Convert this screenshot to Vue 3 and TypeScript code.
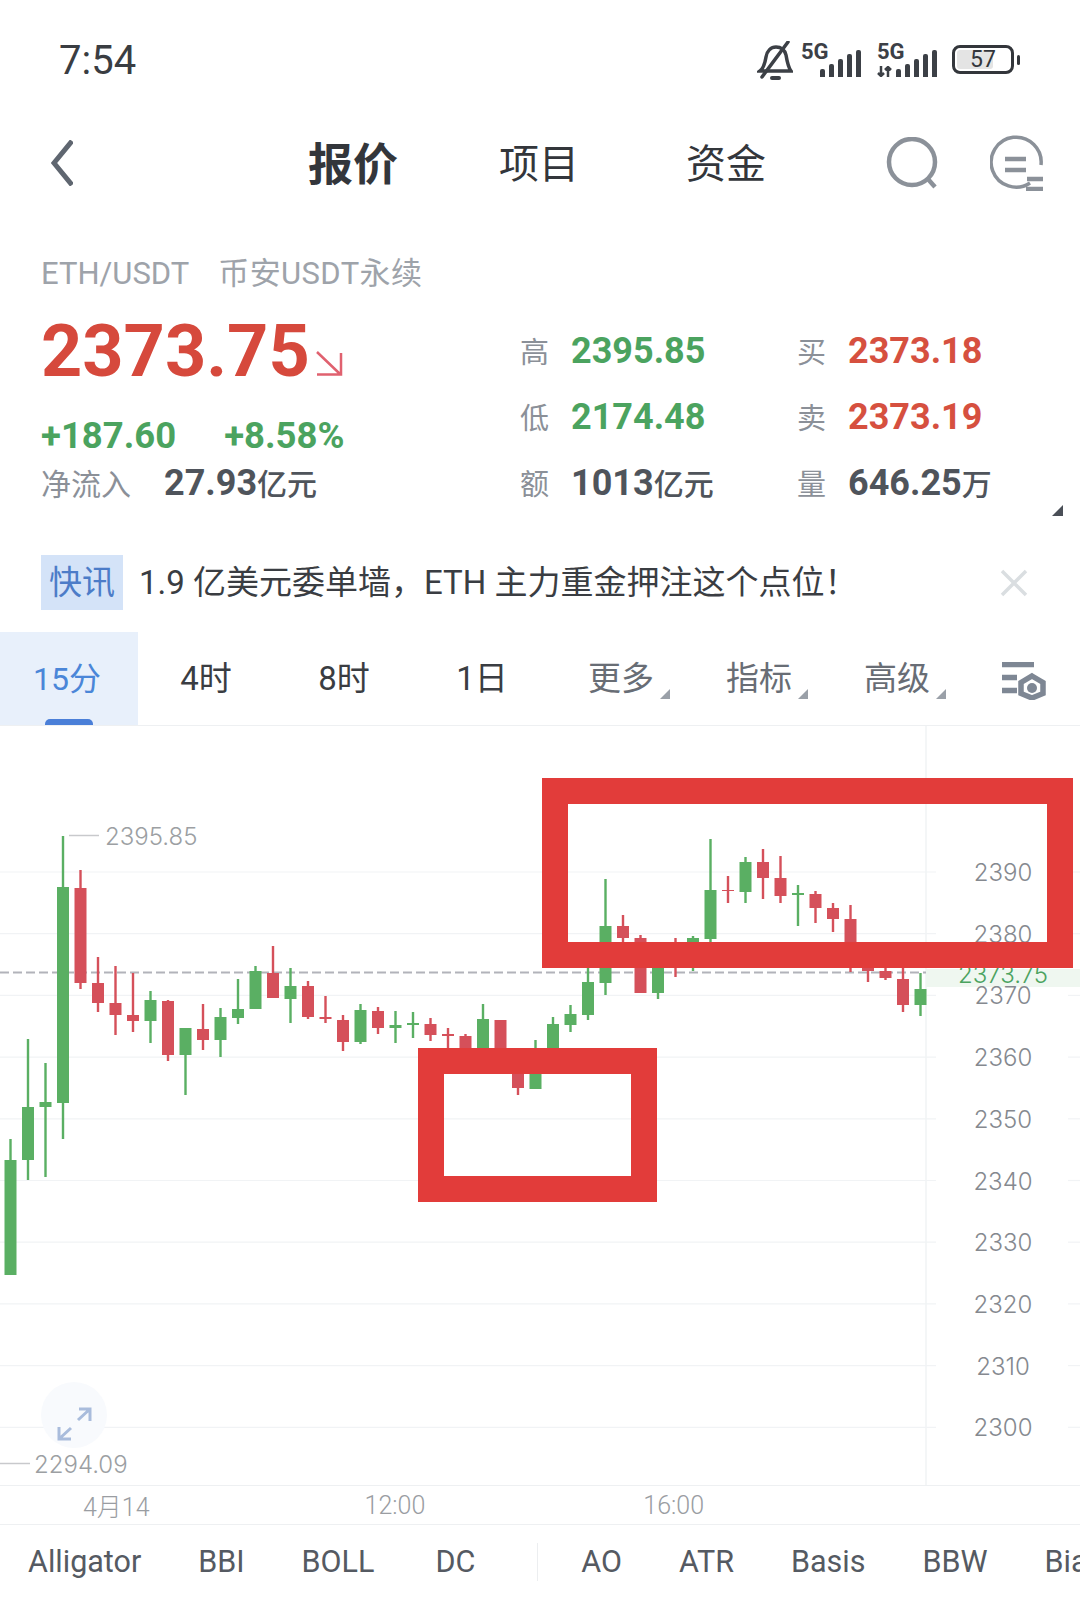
<template>
  <div class="screen">
    <!-- status bar -->
    <div class="status">
      <span class="clock">7:54</span>
      <div class="status-icons">
        <svg class="bell" width="36" height="40" viewBox="0 0 36 40" fill="none" stroke="#3c4046" stroke-width="3.500" stroke-linecap="round">
          <path d="M3 30c4-3 5-8 6-14 1-6 5-10 10-10s9 3 10 8c1 6 2 12 5 16z" />
          <path d="M31 1 5 36" />
          <path d="M15 37h7" stroke-width="4" />
        </svg>
        <div class="net">
          <span class="net-label">5G</span>
          <div class="bars">
            <i v-for="h in signal" :key="h" :style="{ height: h + 'px' }"></i>
          </div>
        </div>
        <div class="net net-two">
          <span class="net-label">5G</span>
          <svg class="updown" width="15" height="11" viewBox="0 0 15 11" fill="none" stroke="#3c4046" stroke-width="2.500">
            <path d="M4 0v10M1 7l3 3 3-3M11 11V1M8 4l3-3 3 3" />
          </svg>
          <div class="bars">
            <i v-for="h in signal" :key="h" :style="{ height: h + 'px' }"></i>
          </div>
        </div>
        <div class="battery">
          <div class="battery-body">
            <div class="battery-fill"></div>
            <span>57</span>
          </div>
          <div class="battery-nub"></div>
        </div>
      </div>
    </div>

    <!-- top nav -->
    <div class="nav">
      <svg class="back" width="22" height="46" viewBox="0 0 22 46" fill="none" stroke="#5f6670" stroke-width="5">
        <path d="M21 1 3 23l18 22" />
      </svg>
      <span class="nav-item active">报价</span>
      <span class="nav-item">项目</span>
      <span class="nav-item">资金</span>
      <svg class="nav-search" width="54" height="52" viewBox="0 0 54 52" fill="none" stroke="#8b9199" stroke-width="4.500">
        <circle cx="26" cy="25" r="23" />
        <path d="m41 41 8 9" />
      </svg>
      <svg class="nav-menu" width="54" height="56" viewBox="0 0 54 56" fill="none" stroke="#8b9199" stroke-width="3.500">
        <path d="M40 48A25 25 0 1 1 51 30" />
        <path d="M15 24h21M15 35h21" stroke-width="4.500" />
        <path d="M37 44h16M36 54h17" stroke-width="4.500" />
      </svg>
    </div>

    <!-- quote -->
    <div class="quote">
      <div class="pair">
        <span>ETH/USDT</span>
        <span class="pair-market">币安USDT永续</span>
      </div>
      <div class="quote-body">
        <div class="quote-left">
          <div class="last">
            <span class="last-price">2373.75</span>
            <svg width="27" height="26" viewBox="0 0 27 26" fill="none" stroke="#e0616f" stroke-width="2.500">
              <path d="m1 2 23 22M25 3v21.500H1" />
            </svg>
          </div>
          <div class="change">
            <span>+187.60</span>
            <span>+8.58%</span>
          </div>
          <div class="flow">
            <span class="stat-label">净流入</span>
            <span class="stat-num dark">27.93<small>亿元</small></span>
          </div>
        </div>
        <div class="stats">
          <div v-for="s in stats" :key="s.label" class="stat">
            <span class="stat-label">{{ s.label }}</span>
            <span class="stat-num" :class="s.tone">{{ s.value }}<small v-if="s.unit">{{ s.unit }}</small></span>
          </div>
        </div>
      </div>
      <i class="corner quote-corner"></i>
    </div>

    <!-- news -->
    <div class="news">
      <span class="news-tag">快讯</span>
      <span class="news-text">1.9 亿美元委单墙，ETH 主力重金押注这个点位！</span>
      <svg class="news-close" width="28" height="28" viewBox="0 0 28 28" stroke="#dadee1" stroke-width="3.500">
        <path d="m2 2 24 24M26 2 2 26" />
      </svg>
    </div>

    <!-- period tabs -->
    <div class="periods">
      <div v-for="p in periods" :key="p.label" class="period" :class="{ active: p.active, muted: p.more }">
        <span>{{ p.label }}</span>
        <i v-if="p.more" class="corner"></i>
      </div>
      <svg class="period-set" width="46" height="38" viewBox="0 0 46 38" fill="none">
        <path d="M1 2.500h32M1 15.500h15M1 28.500h15" stroke="#7e8794" stroke-width="5.500" />
        <path d="M31 14 42 20.500v11L31 36 20 31.500v-11z" stroke="#7e8794" stroke-width="5.500" />
        <circle cx="31" cy="26" r="5" fill="#7e8794" />
      </svg>
    </div>

    <!-- chart -->
    <svg class="chart" width="1080" height="759" viewBox="0 726 1080 759">
      <g stroke="#f1f3f5" stroke-width="1.200">
        <template v-for="g in grid" :key="g.label">
          <line x1="0" x2="936" :y1="g.y" :y2="g.y" />
          <line x1="1068" x2="1080" :y1="g.y" :y2="g.y" />
        </template>
      </g>
      <line x1="926" x2="926" y1="726" y2="1485" stroke="#f1f3f5" stroke-width="1.500" />
      <rect x="926" y="969" width="154" height="18" fill="#eff7f0" />
      <line x1="0" x2="926" y1="972.500" y2="972.500" stroke="#b2b3ba" stroke-width="1.800" stroke-dasharray="9 4" />

      <circle cx="74" cy="1415" r="33" fill="#f8fafd" />
      <path d="M78 1420 90 1409M79 1409h11v12M71 1428 59 1439M59 1427v12h12" fill="none" stroke="#a9bcdc" stroke-width="3" />

      <g v-for="(c, i) in candles" :key="i" :fill="c[4] === 'g' ? '#5aaf63' : '#d5505a'">
        <rect :x="candleX(i) - 1" :y="c[0]" width="2.400" :height="c[3] - c[0]" />
        <rect :x="candleX(i) - 5.800" :y="c[1]" width="12" :height="c[2] - c[1]" />
      </g>

      <line x1="69" x2="99" y1="835.500" y2="835.500" stroke="#c8c9cc" stroke-width="1.500" />
      <text class="extreme" x="105" y="845">2395.85</text>
      <line x1="0" x2="30" y1="1463.500" y2="1463.500" stroke="#c8c9cc" stroke-width="1.500" />
      <text class="extreme" x="34" y="1473">2294.09</text>

      <text v-for="g in grid" :key="g.label" class="axis" x="1003" :y="g.y + 9">{{ g.label }}</text>
      <text class="axis last-tag" x="1003" y="983">2373.75</text>

      <!-- hand-drawn annotation boxes on top of the chart -->
      <rect class="mark" x="555" y="791" width="505" height="164" />
      <rect class="mark" x="431" y="1061" width="213" height="128" />
    </svg>

    <!-- time axis -->
    <div class="times">
      <span>4月14</span>
      <span>12:00</span>
      <span>16:00</span>
    </div>

    <!-- indicators -->
    <div class="indicators">
      <span v-for="n in mainIndicators" :key="n">{{ n }}</span>
      <i class="ind-divider"></i>
      <span v-for="n in subIndicators" :key="n">{{ n }}</span>
    </div>
  </div>
</template>

<script setup lang="ts">
type Candle = [number, number, number, number, 'g' | 'r'];

const signal = [8, 13, 18, 23, 27];

const stats = [
  { label: '高', value: '2395.85', tone: 'up', unit: '' },
  { label: '买', value: '2373.18', tone: 'down', unit: '' },
  { label: '低', value: '2174.48', tone: 'up', unit: '' },
  { label: '卖', value: '2373.19', tone: 'down', unit: '' },
  { label: '额', value: '1013', tone: 'dark', unit: '亿元' },
  { label: '量', value: '646.25', tone: 'dark', unit: '万' },
];

const periods = [
  { label: '15分', active: true, more: false },
  { label: '4时', active: false, more: false },
  { label: '8时', active: false, more: false },
  { label: '1日', active: false, more: false },
  { label: '更多', active: false, more: true },
  { label: '指标', active: false, more: true },
  { label: '高级', active: false, more: true },
];

const grid = [2390, 2380, 2370, 2360, 2350, 2340, 2330, 2320, 2310, 2300].map((v, i) => ({
  label: String(v),
  y: 872 + i * 61.7,
}));

const mainIndicators = ['Alligator', 'BBI', 'BOLL', 'DC'];
const subIndicators = ['AO', 'ATR', 'Basis', 'BBW', 'Bias'];

// high, body top, body bottom, low (page y), colour
const candles: Candle[] = [
  [1139, 1160, 1275, 1275, 'g'],
  [1039, 1107, 1160, 1180, 'g'],
  [1063, 1102, 1107, 1177, 'g'],
  [836, 887, 1103, 1139, 'g'],
  [870, 888, 983, 989, 'r'],
  [957, 983, 1003, 1012, 'r'],
  [966, 1003, 1015, 1035, 'r'],
  [973, 1015, 1021, 1032, 'r'],
  [991, 1000, 1021, 1043, 'g'],
  [1000, 1001, 1055, 1061, 'r'],
  [1028, 1028, 1055, 1095, 'g'],
  [1004, 1029, 1040, 1050, 'r'],
  [1008, 1017, 1040, 1057, 'g'],
  [979, 1009, 1018, 1024, 'g'],
  [966, 971, 1009, 1009, 'g'],
  [946, 973, 998, 998, 'r'],
  [968, 986, 999, 1023, 'g'],
  [981, 986, 1017, 1019, 'r'],
  [996, 1017, 1019, 1023, 'r'],
  [1015, 1020, 1042, 1051, 'r'],
  [1004, 1010, 1042, 1044, 'g'],
  [1007, 1011, 1028, 1034, 'r'],
  [1011, 1025, 1028, 1043, 'g'],
  [1012, 1023, 1025, 1038, 'g'],
  [1018, 1024, 1035, 1041, 'r'],
  [1028, 1034, 1036, 1055, 'r'],
  [1034, 1036, 1052, 1052, 'r'],
  [1004, 1019, 1052, 1052, 'g'],
  [1020, 1020, 1052, 1052, 'r'],
  [1050, 1055, 1088, 1095, 'r'],
  [1040, 1055, 1089, 1089, 'g'],
  [1017, 1024, 1052, 1052, 'g'],
  [1005, 1014, 1025, 1032, 'g'],
  [960, 982, 1015, 1020, 'g'],
  [879, 926, 983, 995, 'g'],
  [915, 926, 938, 945, 'r'],
  [935, 938, 993, 993, 'r'],
  [950, 955, 993, 999, 'g'],
  [938, 950, 952, 977, 'r'],
  [936, 938, 950, 971, 'g'],
  [839, 890, 939, 942, 'g'],
  [876, 890, 891, 903, 'r'],
  [857, 862, 892, 903, 'g'],
  [849, 862, 878, 899, 'r'],
  [856, 878, 896, 903, 'r'],
  [885, 893, 895, 926, 'g'],
  [891, 894, 908, 923, 'r'],
  [903, 908, 919, 932, 'r'],
  [905, 919, 945, 972, 'r'],
  [950, 955, 971, 982, 'r'],
  [960, 971, 978, 980, 'r'],
  [963, 979, 1005, 1012, 'r'],
  [973, 989, 1005, 1016, 'g'],
];

function candleX(i: number): number {
  return 10.3 + 17.5 * i;
}
</script>

<style>
body {
  background: #fff;
}
</style>

<style scoped>
.screen {
  width: 1080px;
  height: 1602px;
  overflow: hidden;
  background: #fff;
  display: flex;
  flex-direction: column;
  font-family: Roboto, "Noto Sans CJK SC", sans-serif;
  color: #33363b;
}
.screen > * {
  flex-shrink: 0;
}

.status {
  height: 120px;
  padding: 41px 60px 0 59px;
  box-sizing: border-box;
  display: flex;
  justify-content: space-between;
  align-items: flex-start;
}
.clock {
  font-size: 40px;
  line-height: 40px;
  color: #3a3d42;
}
.status-icons {
  display: flex;
  align-items: flex-start;
}
.net {
  position: relative;
  width: 60px;
  height: 34px;
  margin: 2px 0 0 8px;
}
.net-two {
  margin-left: 16px;
}
.net-label {
  position: absolute;
  left: 0;
  top: 0;
  font-size: 22px;
  line-height: 18px;
  font-weight: 700;
  color: #3c4046;
}
.updown {
  position: absolute;
  left: 0;
  bottom: 0;
}
.bars {
  position: absolute;
  right: 0;
  bottom: 0;
  display: flex;
  align-items: flex-end;
  gap: 4px;
}
.bars i {
  width: 5px;
  background: #3c4046;
  border-radius: 2px 2px 0 0;
}
.battery {
  display: flex;
  align-items: center;
  margin: 4px 0 0 15px;
}
.battery-body {
  position: relative;
  width: 62px;
  height: 29px;
  box-sizing: border-box;
  border: 3px solid #33363b;
  border-radius: 8px;
  display: flex;
  align-items: center;
  justify-content: center;
  font-size: 23px;
  color: #33363b;
}
.battery-fill {
  position: absolute;
  left: 2px;
  top: 2px;
  bottom: 2px;
  width: 36px;
  background: #e4e4e4;
  border-radius: 3px;
}
.battery-body span {
  position: relative;
}
.battery-nub {
  width: 3px;
  height: 10px;
  margin-left: 3px;
  background: #33363b;
  border-radius: 2px;
}

.nav {
  height: 120px;
  display: flex;
  align-items: center;
  padding: 0 36px 34px 51px;
  box-sizing: border-box;
}
.nav-item {
  font-size: 40px;
  width: 78px;
  margin-left: 109px;
  margin-bottom: 4px;
  white-space: nowrap;
  color: #33363b;
}
.nav-item.active {
  width: 90px;
  font-size: 45px;
  font-weight: 700;
  margin-left: 235px;
}
.nav-item.active + .nav-item {
  margin-left: 101px;
}
.nav-search {
  margin-left: auto;
}
.nav-menu {
  margin-left: 50px;
}

.quote {
  position: relative;
  height: 300px;
  padding: 13px 0 0 41px;
  box-sizing: border-box;
}
.pair {
  display: flex;
  gap: 29px;
  font-size: 31px;
  line-height: 42px;
  color: #9ea3aa;
}
.pair-market {
  letter-spacing: 0.4px;
}
.quote-body {
  display: flex;
  margin-top: 25px;
}
.quote-left {
  width: 479px;
  flex-shrink: 0;
}
.last {
  display: flex;
  align-items: flex-end;
  gap: 6px;
  height: 64px;
}
.last svg {
  margin-bottom: 8px;
}
.last-price {
  font-size: 72px;
  line-height: 64px;
  font-weight: 700;
  color: #d6493c;
}
.change {
  display: flex;
  gap: 48px;
  margin-top: 32px;
  font-size: 36.500px;
  line-height: 40px;
  font-weight: 700;
  color: #4ba35f;
}
.flow {
  display: flex;
  align-items: baseline;
  gap: 33px;
  margin-top: 4px;
}
.stats {
  display: grid;
  grid-template-columns: 277px 1fr;
  grid-auto-rows: 66px;
  margin-top: 9px;
}
.stat {
  display: flex;
  align-items: baseline;
  gap: 22px;
  line-height: 44px;
}
.stat-label {
  font-size: 29px;
  color: #8b9098;
}
.flow .stat-label {
  font-size: 30px;
}
.stat-num {
  font-size: 36px;
  font-weight: 700;
  line-height: 44px;
  white-space: nowrap;
}
.stat-num small {
  font-size: 30px;
  font-weight: 500;
}
.up {
  color: #4ba35f;
}
.down {
  color: #d6503f;
}
.dark {
  color: #4f545b;
}
.corner {
  width: 0;
  height: 0;
  border-style: solid;
  border-width: 0 0 10px 10px;
  border-color: transparent transparent #9aa0a8 transparent;
}
.quote-corner {
  position: absolute;
  left: 1052px;
  top: 265px;
  border-width: 0 0 11px 11px;
  border-bottom-color: #4a4f57;
}

.news {
  height: 92px;
  padding: 15px 0 0 41px;
  box-sizing: border-box;
  display: flex;
  align-items: flex-start;
}
.news-tag {
  width: 82px;
  height: 55px;
  line-height: 55px;
  text-align: center;
  font-size: 33px;
  color: #4c7cc8;
  background: #d4e3f8;
  white-space: nowrap;
}
.news-text {
  margin-left: 16px;
  font-size: 33px;
  line-height: 55px;
  white-space: nowrap;
  color: #3a3d42;
}
.news-close {
  margin: 14px 52px 0 auto;
}

.periods {
  height: 94px;
  display: flex;
  border-bottom: 1px solid #eef0f2;
  box-sizing: border-box;
}
.period {
  position: relative;
  width: 138px;
  display: flex;
  align-items: center;
  justify-content: center;
  font-size: 33px;
  padding: 0 2px 6px 0;
  box-sizing: border-box;
  color: #3a3d42;
}
.period.muted {
  padding-right: 0;
  color: #686d75;
}
.period .corner {
  position: absolute;
  left: 108px;
  top: 57px;
}
.period.active {
  padding-right: 4px;
  font-size: 32px;
  color: #4a86d8;
  background: #e8f0fb;
}
.period.active::after {
  content: "";
  position: absolute;
  left: 45px;
  bottom: 0;
  width: 48px;
  height: 6px;
  border-radius: 5px 5px 0 0;
  background: #4a7fd8;
}
.period-set {
  margin: 30px 0 0 35px;
}

.chart {
  display: block;
}
.extreme {
  font-family: Inter, sans-serif;
  font-weight: 300;
  font-size: 24px;
  fill: #9c9fa3;
}
.axis {
  font-family: Inter, sans-serif;
  font-weight: 300;
  font-size: 24px;
  text-anchor: middle;
  fill: #85898f;
}
.last-tag {
  fill: #4ba35f;
}
.mark {
  fill: none;
  stroke: #e23c3a;
  stroke-width: 26;
}

.times {
  height: 38px;
  border-top: 1px solid #eef0f2;
  border-bottom: 1px solid #eef0f2;
  display: flex;
  align-items: center;
  padding-left: 83px;
  font-size: 25px;
  font-weight: 300;
  color: #9a9da2;
  white-space: nowrap;
}
.times span:nth-child(2) {
  margin-left: 215px;
}
.times span:nth-child(3) {
  margin-left: 218px;
}

.indicators {
  height: 77px;
  display: flex;
  align-items: center;
  gap: 57px;
  padding: 0 0 4px 28px;
  box-sizing: border-box;
  font-size: 30.500px;
  font-weight: 400;
  color: #555a62;
  white-space: nowrap;
  overflow: hidden;
}
.indicators span:nth-child(4) {
  margin-left: 4px;
}
.ind-divider {
  width: 1px;
  height: 38px;
  flex-shrink: 0;
  margin-left: 5px;
  margin-right: -14px;
  background: #eceef0;
}
</style>
